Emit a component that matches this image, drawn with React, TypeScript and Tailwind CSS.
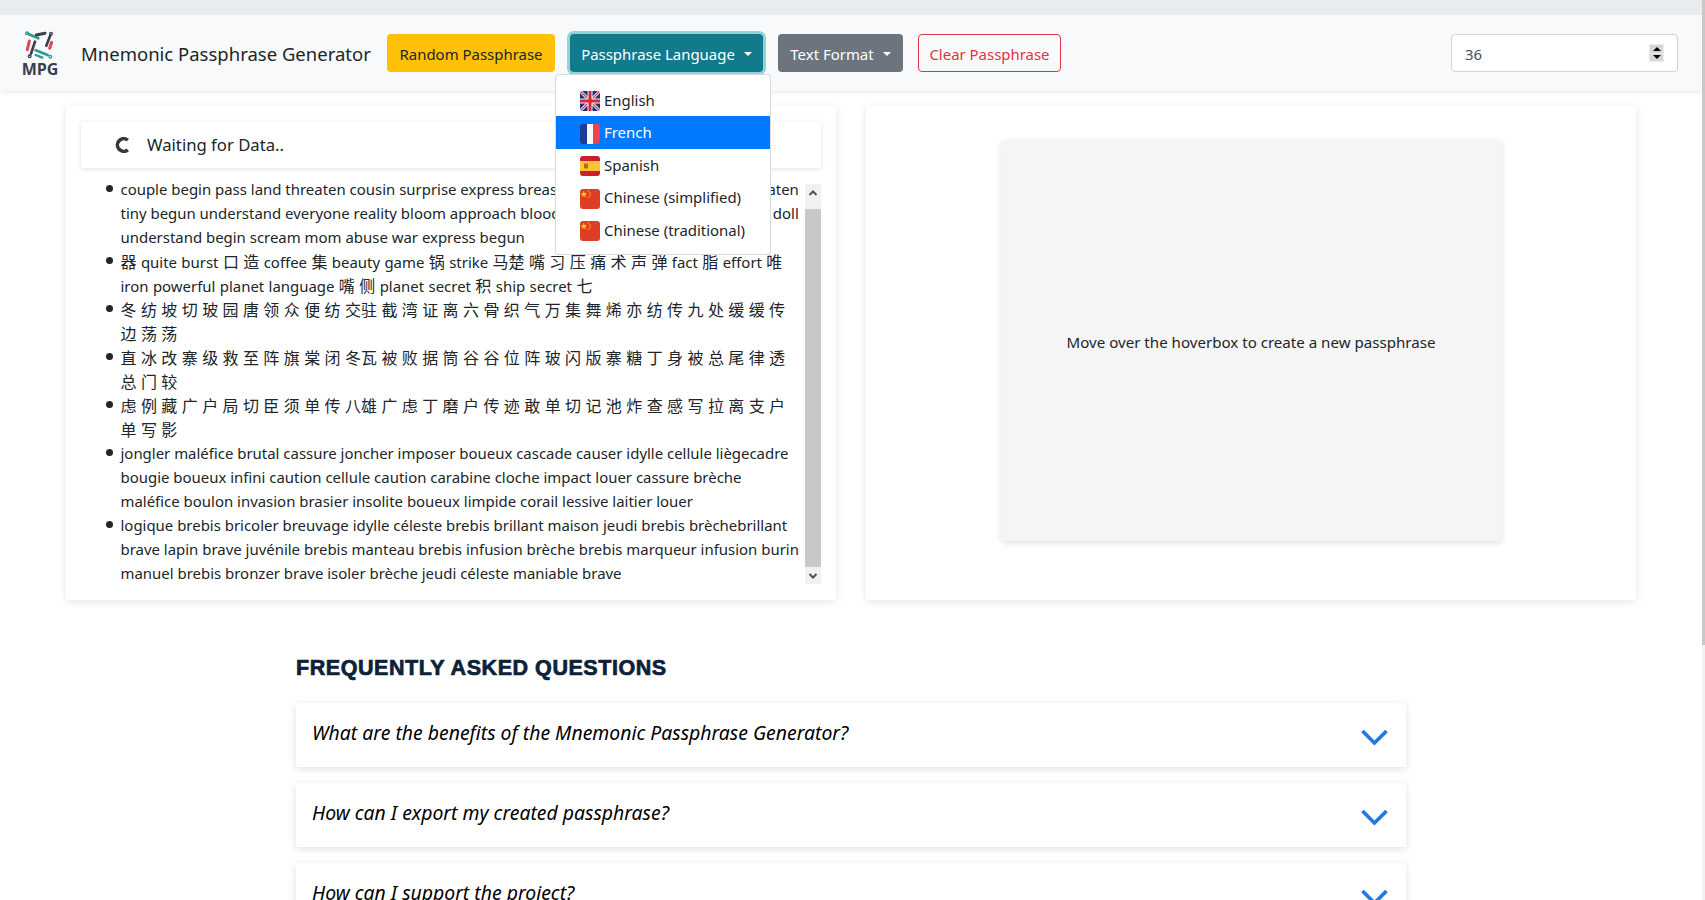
import { ReactNode } from 'react';

const items = [
  [
    'couple begin pass land threaten cousin surprise express breast scream abuse mom war threaten',
    'tiny begun understand everyone reality bloom approach blood cousin war express mom war doll',
    'understand begin scream mom abuse war express begun',
  ],
  [
    '器 quite burst 口 造 coffee 集 beauty game 锅 strike 马楚 嘴 习 压 痛 术 声 弹 fact 脂 effort 唯',
    'iron powerful planet language 嘴 侧 planet secret 积 ship secret 七',
  ],
  ['冬 纺 坡 切 玻 园 唐 领 众 便 纺 交驻 截 湾 证 离 六 骨 织 气 万 集 舞 烯 亦 纺 传 九 处 缓 缓 传', '边 荡 荡'],
  ['直 冰 改 寨 级 救 至 阵 旗 棠 闭 冬瓦 被 败 据 筒 谷 谷 位 阵 玻 闪 版 寨 糖 丁 身 被 总 尾 律 透', '总 门 较'],
  ['虑 例 藏 广 户 局 切 臣 须 单 传 八雄 广 虑 丁 磨 户 传 迹 敢 单 切 记 池 炸 查 感 写 拉 离 支 户', '单 写 影'],
  [
    'jongler maléfice brutal cassure joncher imposer boueux cascade causer idylle cellule liègecadre',
    'bougie boueux infini caution cellule caution carabine cloche impact louer cassure brèche',
    'maléfice boulon invasion brasier insolite boueux limpide corail lessive laitier louer',
  ],
  [
    'logique brebis bricoler breuvage idylle céleste brebis brillant maison jeudi brebis brèchebrillant',
    'brave lapin brave juvénile brebis manteau brebis infusion brèche brebis marqueur infusion burin',
    'manuel brebis bronzer brave isoler brèche jeudi céleste maniable brave',
  ],
];

const faqs = [
  'What are the benefits of the Mnemonic Passphrase Generator?',
  'How can I export my created passphrase?',
  'How can I support the project?',
];

function MixedLine({ text }: { text: string }) {
  const parts = text.split(/([\u4e00-\u9fff]+)/);
  return (
    <div className={`h-6 whitespace-nowrap leading-6 ${parts.length > 1 ? '[word-spacing:0.5px]' : ''}`}>
      {parts.map((part, i) =>
        i % 2 === 1 ? (
          <span key={i} className="font-['Noto_Sans_CJK_SC',sans-serif] text-[16px]">
            {part}
          </span>
        ) : (
          <span key={i}>{part}</span>
        ),
      )}
    </div>
  );
}

function Logo() {
  return (
    <div className="flex w-[36px] flex-col items-center">
      <svg width="30" height="31" viewBox="0 0 90 93" fill="none" strokeLinecap="round">
        <circle cx="6" cy="7" r="4" stroke="#2a9d8f" strokeWidth="4" />
        <path d="M10 9 L40 22" stroke="#2a9d8f" strokeWidth="8" />
        <path d="M34 12 L60 7" stroke="#3a3f4d" strokeWidth="9" />
        <circle cx="78" cy="8" r="4" stroke="#3a3f4d" strokeWidth="4" />
        <path d="M76 13 L64 44" stroke="#3a3f4d" strokeWidth="8" />
        <path d="M80 34 L74 52" stroke="#e2474b" strokeWidth="9" />
        <path d="M13 30 L7 56" stroke="#e2474b" strokeWidth="9" />
        <path d="M30 32 L18 68" stroke="#3a3f4d" strokeWidth="8" />
        <circle cx="14" cy="76" r="4" stroke="#3a3f4d" strokeWidth="4" />
        <path d="M32 58 L68 72" stroke="#2a9d8f" strokeWidth="8" />
        <circle cx="76" cy="77" r="4" stroke="#2a9d8f" strokeWidth="4" />
        <path d="M32 72 L52 80" stroke="#2a9d8f" strokeWidth="7" />
      </svg>
      <span className="font-['Open_Sans',sans-serif] text-[16px] leading-[14px] font-bold text-[#3a3f4d]">MPG</span>
    </div>
  );
}

function Caret() {
  return <span className="ml-[9px] h-0 w-0 border-x-[4.5px] border-t-[4.5px] border-x-transparent border-t-white" />;
}

function FlagFrame({ children }: { children: ReactNode }) {
  return (
    <svg width="20" height="20" viewBox="0 0 20 20" className="mt-[3px] shrink-0 rounded-[3px]">
      {children}
    </svg>
  );
}

const flags: Record<string, ReactNode> = {
  uk: (
    <FlagFrame>
      <rect width="20" height="20" fill="#1e2f7a" />
      <path d="M0 0 L20 20 M20 0 L0 20" stroke="#f4f4f4" strokeWidth="3" />
      <path d="M0 0 L20 20 M20 0 L0 20" stroke="#d3293e" strokeWidth="1.2" />
      <path d="M10 0 V20 M0 10 H20" stroke="#f4f4f4" strokeWidth="5" />
      <path d="M10 0 V20 M0 10 H20" stroke="#d3293e" strokeWidth="3" />
    </FlagFrame>
  ),
  fr: (
    <FlagFrame>
      <rect width="7" height="20" fill="#1f3b94" />
      <rect x="7" width="6" height="20" fill="#f7f7f7" />
      <rect x="13" width="7" height="20" fill="#ef4150" />
    </FlagFrame>
  ),
  es: (
    <FlagFrame>
      <rect width="20" height="20" fill="#c8202c" />
      <rect y="5" width="20" height="10" fill="#fbc531" />
      <rect x="4" y="7.5" width="4" height="5" rx="1" fill="#b5651d" />
    </FlagFrame>
  ),
  cn: (
    <FlagFrame>
      <rect width="20" height="20" fill="#de3d26" />
      <path d="M4 2 L5 5 L8 5 L5.6 6.8 L6.5 9.6 L4 8 L1.5 9.6 L2.4 6.8 L0 5 L3 5 Z" fill="#fcd116" transform="translate(0.4 0) scale(0.85)" />
      <circle cx="8.5" cy="2" r="0.8" fill="#f3b01c" />
      <circle cx="10" cy="4" r="0.8" fill="#f3b01c" />
      <circle cx="10" cy="6.4" r="0.8" fill="#f3b01c" />
      <circle cx="8.5" cy="8.2" r="0.8" fill="#f3b01c" />
    </FlagFrame>
  ),
};

const languages = [
  { name: 'English', flag: 'uk', active: false },
  { name: 'French', flag: 'fr', active: true },
  { name: 'Spanish', flag: 'es', active: false },
  { name: 'Chinese (simplified)', flag: 'cn', active: false },
  { name: 'Chinese (traditional)', flag: 'cn', active: false },
];

function LanguageMenu() {
  return (
    <div className="absolute top-[59px] left-[555px] z-20 w-[216px] rounded-[4px] border border-black/15 bg-white pt-[8.5px] pb-[7.5px]">
      {languages.map((lang) => (
        <div
          key={lang.name}
          className={`flex h-[32.5px] items-center gap-1 pl-6 ${lang.active ? 'bg-[#007bff] text-white' : 'text-[#212529]'}`}
        >
          {flags[lang.flag]}
          <span>{lang.name}</span>
        </div>
      ))}
    </div>
  );
}

function Scrollbar() {
  return (
    <div className="mt-[7px] flex h-[400px] w-4 shrink-0 flex-col bg-[#f1f1f1]">
      <div className="flex h-[25px] justify-center pt-[5px]">
        <svg width="10" height="8" viewBox="0 0 10 8" fill="none">
          <path d="M1.5 6 L5 2.5 L8.5 6" stroke="#505050" strokeWidth="2" />
        </svg>
      </div>
      <div className="h-[358px] bg-[#c8c8c8]" />
      <div className="flex flex-1 justify-center pt-[5px]">
        <svg width="10" height="8" viewBox="0 0 10 8" fill="none">
          <path d="M1.5 2 L5 5.5 L8.5 2" stroke="#505050" strokeWidth="2" />
        </svg>
      </div>
    </div>
  );
}

export default function App() {
  return (
    <div className="relative h-[900px] w-full overflow-hidden bg-white font-['Noto_Sans','Noto_Sans_CJK_SC',sans-serif] text-[14.95px] text-[#212529]">
      <div className="h-[15px] bg-[#e9ecef]" />

      <nav className="relative z-10 flex h-[76px] items-center bg-[#f8f9fa] pr-[27px] pl-[22px] shadow-[0_2px_4px_rgba(0,0,0,0.075)]">
        <div className="flex w-[36px] items-center">
          <Logo />
        </div>
        <span className="mt-[2px] ml-[23px] w-[306px] text-[18.5px] leading-none">Mnemonic Passphrase Generator</span>
        <button className="flex h-[38px] w-[168px] items-center justify-center rounded-[4px] bg-[#ffc107] pt-[2px]">Random Passphrase</button>
        <button className="ml-[15px] flex h-[38px] w-[193px] items-center justify-center rounded-[4px] bg-[#117a8b] pt-[2px] text-white shadow-[0_0_0_3px_rgba(23,162,184,0.45)]">
          Passphrase Language
          <Caret />
        </button>
        <button className="ml-[15px] flex h-[38px] w-[125px] items-center justify-center rounded-[4px] bg-[#6c757d] pt-[2px] text-white">
          Text Format
          <Caret />
        </button>
        <button className="ml-[15px] flex h-[38px] w-[143px] items-center justify-center rounded-[4px] border border-[#dc3545] pt-[2px] text-[#dc3545]">
          Clear Passphrase
        </button>
        <div className="ml-auto flex h-[38px] w-[227px] items-center justify-between rounded-[4px] border border-[#ced4da] bg-white pr-[13px] pl-[13px] text-[#495057]">
          <span className="pt-[2px]">36</span>
          <div className="flex h-[18px] w-[15px] flex-col gap-[1px] bg-[#ececec] px-[1px] py-[1px]">
            <div className="flex flex-1 items-center justify-center bg-[#d6d6d6]">
              <span className="h-0 w-0 border-x-[4px] border-b-[4px] border-x-transparent border-b-black" />
            </div>
            <div className="flex flex-1 items-center justify-center bg-[#d6d6d6]">
              <span className="h-0 w-0 border-x-[4px] border-t-[4px] border-x-transparent border-t-black" />
            </div>
          </div>
        </div>
        <LanguageMenu />
      </nav>

      <main className="flex gap-[30px] pt-[15px] pl-[66px]">
        <section className="h-[494px] w-[770px] bg-white px-[15px] pt-4 shadow-[0_2px_8px_rgba(0,0,0,0.1)]">
          <div className="flex h-[46px] w-[740px] items-center pl-[34px] shadow-[0_1px_5px_rgba(0,0,0,0.12)]">
            <svg width="16" height="16" viewBox="0 0 16 16" fill="none">
              <path d="M12.8 3.2 A6.3 6.3 0 1 0 12.8 12.8" stroke="#343a40" strokeWidth="3.6" />
            </svg>
            <span className="ml-4 text-[16.7px]">Waiting for Data..</span>
          </div>
          <div className="mt-[9px] flex">
            <div className="w-[724px] pl-[25px]">
              {items.map((lines, i) => (
                <div key={i} className="flex">
                  <span className="mt-[8px] mr-[7.5px] h-[7px] w-[7px] shrink-0 rounded-full bg-[#212529]" />
                  <div>
                    {lines.map((line, j) => (
                      <MixedLine key={j} text={line} />
                    ))}
                  </div>
                </div>
              ))}
            </div>
            <Scrollbar />
          </div>
        </section>

        <section className="flex h-[494px] w-[770px] justify-center bg-white pt-[34px] shadow-[0_2px_8px_rgba(0,0,0,0.1)]">
          <div className="flex h-[401px] w-[501px] items-center justify-center rounded-[4px] bg-[#f5f5f5] pt-[4px] text-[15.1px] shadow-[0_2px_6px_rgba(0,0,0,0.12)]">
            Move over the hoverbox to create a new passphrase
          </div>
        </section>
      </main>

      <section className="mt-[53px] ml-[296px] w-[1110px]">
        <h2 className="h-[30px] font-['Liberation_Sans',sans-serif] text-[21.5px] leading-[30px] font-bold tracking-[0.55px] text-[#0b2239] [-webkit-text-stroke:0.7px_#0b2239]">
          FREQUENTLY ASKED QUESTIONS
        </h2>
        <div className="mt-[20px] flex flex-col gap-4">
          {faqs.map((q) => (
            <div key={q} className="flex h-16 shrink-0 items-center justify-between bg-white pr-[18px] pl-4 shadow-[0_2px_8px_rgba(0,0,0,0.12)]">
              <span className="mb-[4px] text-[19.4px] text-black italic">{q}</span>
              <svg width="27" height="17" viewBox="0 0 27 17" fill="none" className="mt-[4px]">
                <path d="M1.5 2 L13.5 14 L25.5 2" stroke="#1f7ae0" strokeWidth="3.6" />
              </svg>
            </div>
          ))}
        </div>
      </section>

      <div className="absolute inset-y-0 right-0 z-30 w-[3px] bg-[#f1f1f1]">
        <div className="h-[645px] bg-[#c8c8c8]" />
      </div>
    </div>
  );
}
